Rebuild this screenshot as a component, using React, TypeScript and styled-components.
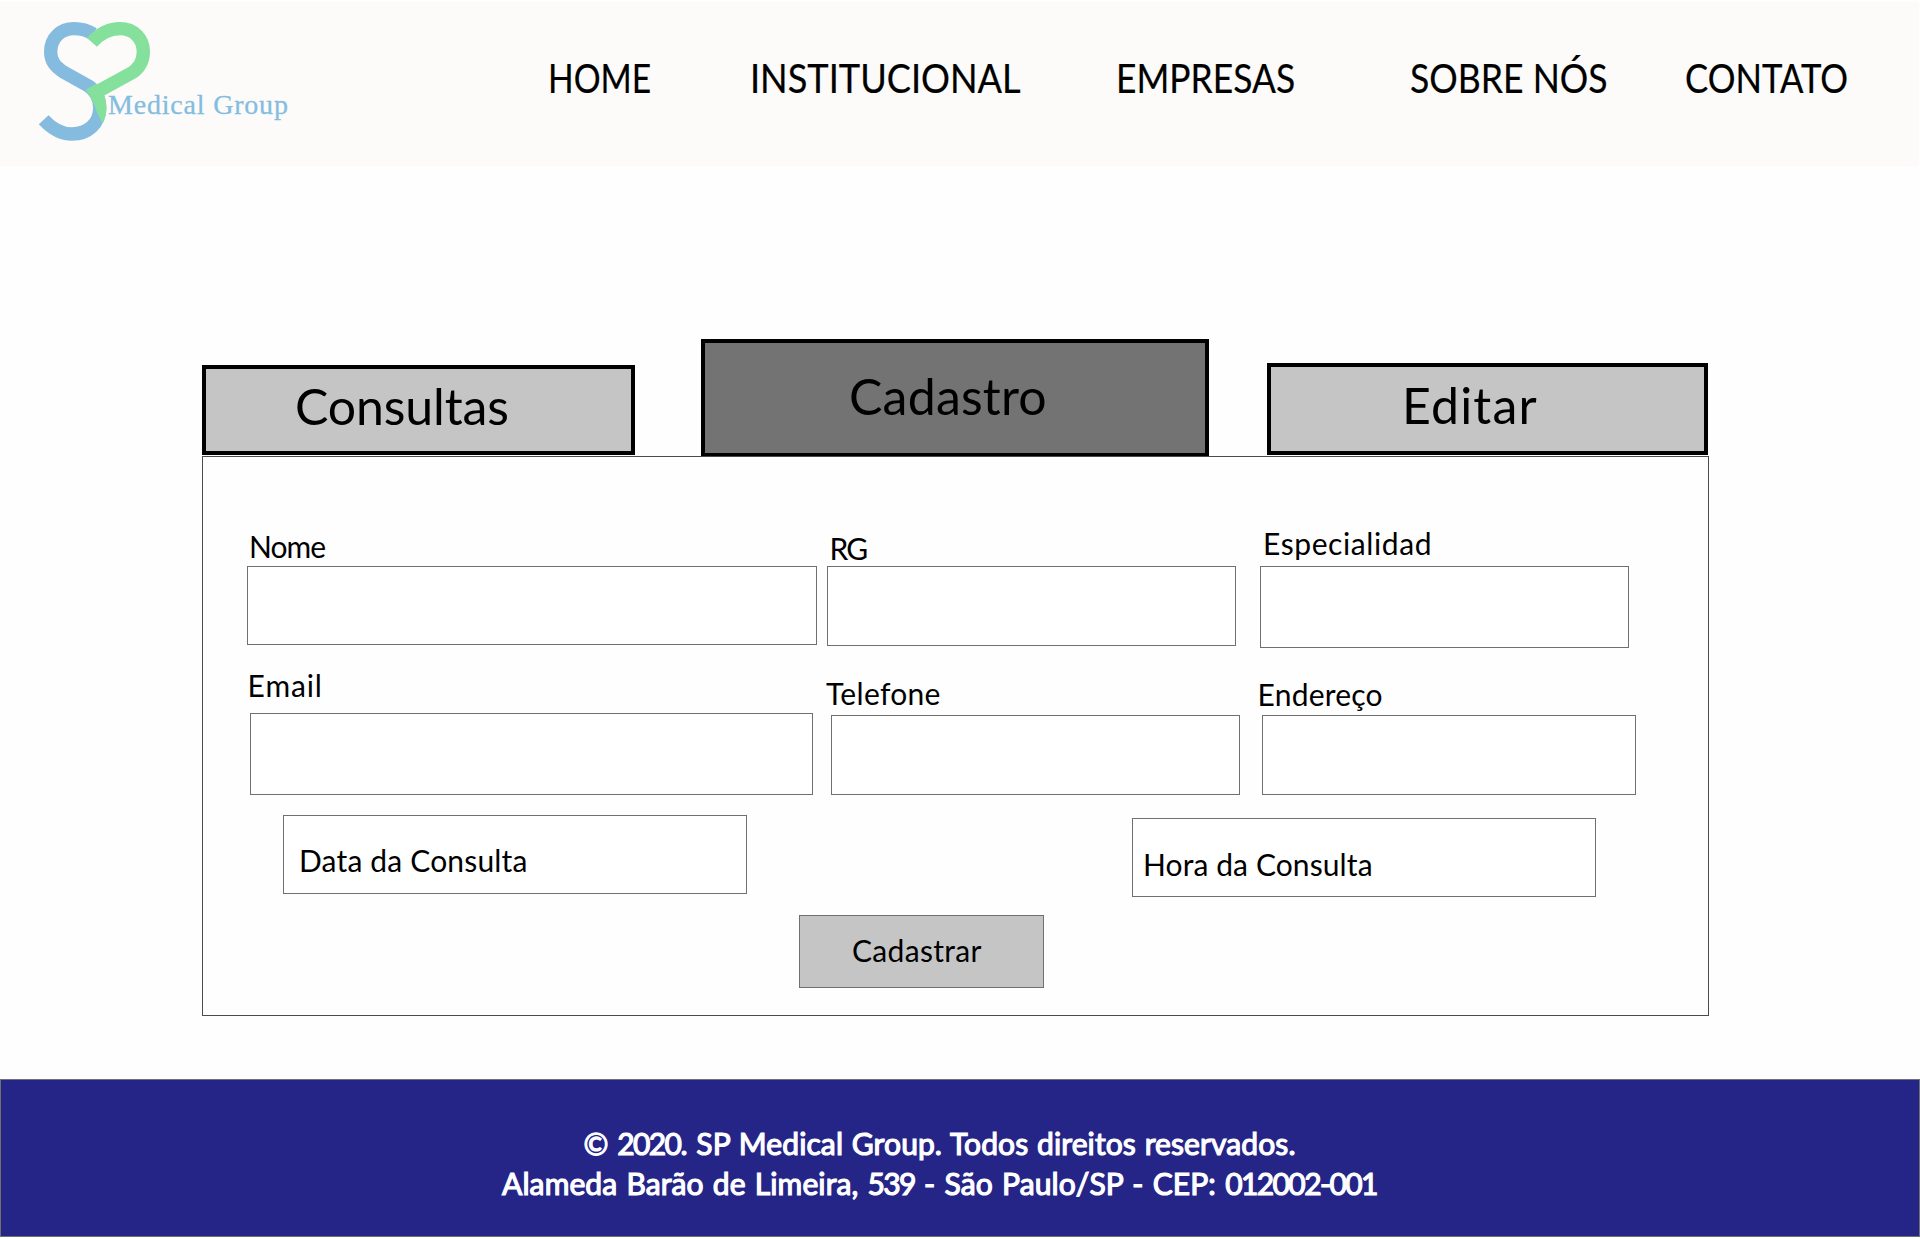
import React from 'react';
import styled, { createGlobalStyle } from 'styled-components';

const GlobalStyle = createGlobalStyle`
  *, *::before, *::after { box-sizing: border-box; }
  body {
    margin: 0;
    background: #fefefe;
    color: #000;
    font-family: Lato, "Open Sans", sans-serif;
  }
`;

const Page = styled.div`
  display: flex;
  flex-direction: column;
  width: 1920px;
  height: 1239px;
  padding-top: 2px;
  overflow: hidden;
`;

const Header = styled.header`
  display: flex;
  align-items: flex-start;
  width: 1919px;
  height: 164px;
  background: #fcfbf9;
`;

const Brand = styled.div`
  display: flex;
  flex: none;
  align-items: flex-start;
  width: 548px;
  padding: 18px 0 0 37px;
`;

const BrandName = styled.span`
  margin: 69px 0 0 -44px;
  font: 28px/32px "Liberation Serif", serif;
  letter-spacing: 0.8px;
  color: #84bddf;
  -webkit-text-stroke: 0.3px currentColor;
  white-space: nowrap;
`;

const Nav = styled.nav`
  display: grid;
  grid-template-columns: 202px 366px 293.5px 275px 200px;
  padding-top: 52px;
`;

const NavLink = styled.a<{ $stretch: number }>`
  font-size: 40px;
  line-height: 48px;
  white-space: nowrap;
  -webkit-text-stroke: 0.2px currentColor;
  transform: scaleX(${(p) => p.$stretch});
  transform-origin: left;
`;

const Main = styled.main`
  display: flex;
  flex-direction: column;
  width: 1507px;
  margin: 173px 0 0 202px;
`;

const Tabs = styled.div`
  display: flex;
  align-items: flex-end;
  height: 117px;
`;

const Tab = styled.button<{ $width: number; $height: number; $pad: string; $gap?: number; $spacing: number; $active?: boolean }>`
  flex: none;
  width: ${(p) => p.$width}px;
  height: ${(p) => p.$height}px;
  margin: 0 0 ${(p) => (p.$active ? 0 : 1)}px ${(p) => p.$gap ?? 0}px;
  padding: ${(p) => p.$pad};
  display: flex;
  align-items: flex-start;
  border: 4px solid #000;
  border-bottom-width: ${(p) => (p.$active ? 3 : 4)}px;
  background: ${(p) => (p.$active ? '#737373' : '#c5c5c5')};
  color: #000;
  font: 50px/60px Lato, sans-serif;
  letter-spacing: ${(p) => p.$spacing}px;
`;

const Panel = styled.form`
  display: flex;
  flex-direction: column;
  height: 560px;
  padding-top: 68px;
  border: 1px solid #4b4b4b;
`;

const Row = styled.div<{ $left: number; $top?: number; $height: number }>`
  display: flex;
  align-items: flex-start;
  flex: none;
  height: ${(p) => p.$height}px;
  margin: ${(p) => p.$top ?? 0}px 0 0 ${(p) => p.$left}px;
`;

const FieldBox = styled.label<{ $width: number; $lead: number; $gap: number }>`
  display: flex;
  flex-direction: column;
  flex: none;
  width: ${(p) => p.$width}px;
  margin-left: ${(p) => p.$gap}px;
  padding-top: ${(p) => p.$lead}px;
`;

const Caption = styled.span<{ $indent: number; $spacing: number; $below: number }>`
  margin: 0 0 ${(p) => p.$below}px ${(p) => p.$indent}px;
  font-size: 30px;
  line-height: 36px;
  letter-spacing: ${(p) => p.$spacing}px;
  white-space: nowrap;
`;

const Input = styled.input<{ $height: number }>`
  width: 100%;
  height: ${(p) => p.$height}px;
  padding: 0 12px;
  border: 1px solid #707070;
  border-radius: 0;
  background: #fff;
  font: 30px Lato, sans-serif;
`;

const Picker = styled.div<{ $gap?: number; $drop?: number; $pad: string; $spacing: number }>`
  flex: none;
  width: 464px;
  height: 79px;
  margin: ${(p) => p.$drop ?? 0}px 0 0 ${(p) => p.$gap ?? 0}px;
  padding: ${(p) => p.$pad};
  border: 1px solid #707070;
  background: #fff;
  font-size: 30px;
  line-height: 36px;
  letter-spacing: ${(p) => p.$spacing}px;
`;

const Submit = styled.button`
  display: flex;
  align-items: flex-start;
  width: 245px;
  height: 73px;
  padding: 16px 0 0 52px;
  border: 1px solid #707070;
  background: #c5c5c5;
  color: #000;
  font: 30px/36px Lato, sans-serif;
  letter-spacing: 0.31px;
`;

const Footer = styled.footer`
  flex: none;
  height: 158px;
  margin-top: 63px;
  padding: 43px 41px 0 0;
  border: 1px solid #707070;
  background: #252587;
  color: #fff;
  text-align: center;
`;

const FooterLine = styled.p<{ $gap: number }>`
  margin: 0;
  font-size: 30px;
  line-height: 40px;
  letter-spacing: 0.1px;
  word-spacing: ${(p) => p.$gap}px;
  -webkit-text-stroke: 1.2px currentColor;
`;

const Digits = styled.span`
  letter-spacing: -1.6px;
`;

const Logo = () => (
  <svg width="115" height="126" viewBox="111 60 345 378" fill="none">
    <path
      d="M280 102C262 91 243 86 222 86C181 86 152 115 152 155C152 184 166 200 192 217L264 257C287 272 299 294 299 324C299 370 264 402 216 402C182 402 155 385 131 359"
      stroke="#84bbdf"
      strokeWidth="40"
    />
    <path
      d="M276 127C301 99 329 86 360 86C401 86 430 115 430 155C430 184 419 204 393 220L298 272"
      stroke="#84e09b"
      strokeWidth="40"
    />
    <path d="M257 269L288 251L313 287C322 313 323 344 307 370C300 354 293 344 287 326C280 306 270 287 257 269Z" fill="#84e09b" />
  </svg>
);

type FieldProps = {
  label: string;
  width: number;
  height: number;
  lead?: number;
  below: number;
  gap?: number;
  indent: number;
  spacing: number;
};

const Field = ({ label, width, height, lead = 0, below, gap = 0, indent, spacing }: FieldProps) => (
  <FieldBox $width={width} $lead={lead} $gap={gap}>
    <Caption $indent={indent} $spacing={spacing} $below={below}>{label}</Caption>
    <Input $height={height} />
  </FieldBox>
);

const links = [
  { label: 'HOME', stretch: 0.84 },
  { label: 'INSTITUCIONAL', stretch: 0.904 },
  { label: 'EMPRESAS', stretch: 0.885 },
  { label: 'SOBRE NÓS', stretch: 0.889 },
  { label: 'CONTATO', stretch: 0.867 },
];

export default function App() {
  return (
    <>
      <GlobalStyle />
      <Page>
        <Header>
          <Brand>
            <Logo />
            <BrandName>Medical Group</BrandName>
          </Brand>
          <Nav>
            {links.map((l) => (
              <NavLink key={l.label} $stretch={l.stretch}>{l.label}</NavLink>
            ))}
          </Nav>
        </Header>

        <Main>
          <Tabs>
            <Tab $width={433} $height={90} $pad="7px 0 0 89px" $spacing={-0.12}>Consultas</Tab>
            <Tab $active $width={508} $height={117} $gap={66} $pad="23px 0 0 144px" $spacing={0.21}>Cadastro</Tab>
            <Tab $width={441} $height={92} $gap={58} $pad="8px 0 0 131px" $spacing={1.18}>Editar</Tab>
          </Tabs>
          <Panel>
            <Row $left={44} $height={123}>
              <Field label="Nome" width={570} height={79} lead={3} below={2} indent={2} spacing={-0.98} />
              <Field label="RG" width={409} height={80} lead={5} below={0} gap={10} indent={2.6} spacing={-2} />
              <Field label="Especialidad" width={369} height={82} below={5} gap={24} indent={3} spacing={0.59} />
            </Row>
            <Row $left={47} $top={19} $height={128}>
              <Field label="Email" width={563} height={82} below={10} indent={-2.4} spacing={0.88} />
              <Field label="Telefone" width={409} height={80} lead={8} below={4} gap={18} indent={-5} spacing={0.31} />
              <Field label="Endereço" width={374} height={80} lead={9} below={3} gap={22} indent={-4.4} spacing={0.21} />
            </Row>
            <Row $left={80} $top={20} $height={82}>
              <Picker $pad="26px 0 0 15px" $spacing={0.17}>Data da Consulta</Picker>
              <Picker $gap={385} $drop={3} $pad="27px 0 0 10px" $spacing={0.1}>Hora da Consulta</Picker>
            </Row>
            <Row $left={596} $top={18} $height={73}>
              <Submit type="button">Cadastrar</Submit>
            </Row>
          </Panel>
        </Main>

        <Footer>
          <FooterLine $gap={1}>
            © <Digits>2020</Digits>. SP Medical Group. Todos direitos reservados.
          </FooterLine>
          <FooterLine $gap={1.4}>
            Alameda Barão de Limeira, <Digits>539</Digits> - São Paulo/SP - CEP: <Digits>012002-001</Digits>
          </FooterLine>
        </Footer>
      </Page>
    </>
  );
}
